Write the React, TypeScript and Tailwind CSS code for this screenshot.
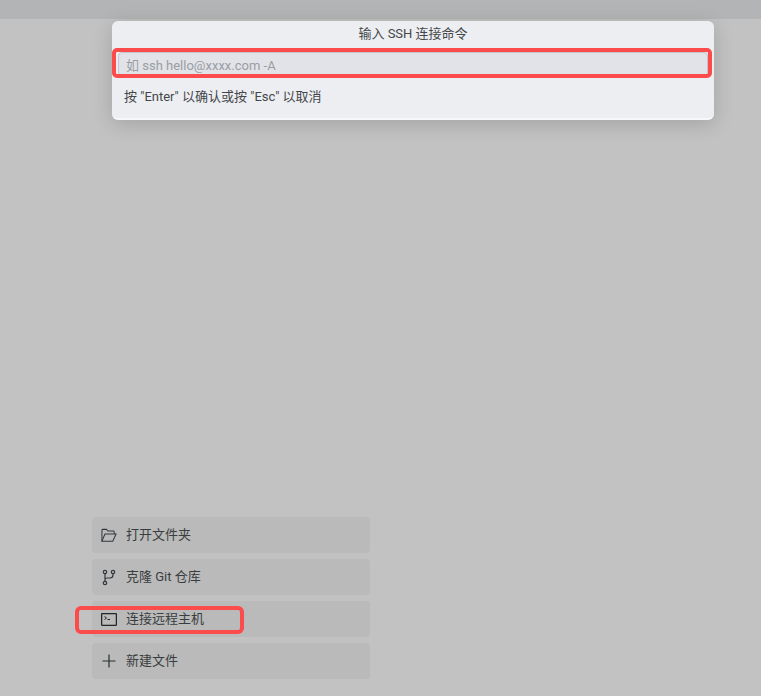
import React from "react";

function Item({ icon, label }: { icon: React.ReactNode; label: string }) {
  return (
    <div className="flex h-9 w-[278px] items-center rounded bg-[#b9bab9] pl-[9px] text-[13px] text-[#3a3d40]">
      <span className="flex w-4 items-center justify-center">{icon}</span>
      <span className="ml-[9px]">{label}</span>
    </div>
  );
}

export default function App() {
  return (
    <div className="relative flex h-[696px] w-[761px] flex-col overflow-hidden bg-[#c2c2c2] font-['Roboto','Noto_Sans_CJK_SC',sans-serif]">
      <div className="h-[19px] bg-[#b3b4b5]" />
      <div className="mt-auto flex flex-col gap-[6px] pb-[17px] pl-[92px]">
        <Item
          label="打开文件夹"
          icon={
            <svg width="17" height="15" viewBox="0 0 17 15" fill="none" stroke="#33383d" strokeWidth="1.1">
              <path d="M1 13.5V2a1 1 0 0 1 1-1h3.8l1.6 1.8H13a1 1 0 0 1 1 1V6" />
              <path d="M1 13.5h11.5L16 6H4.2L1 13.5Z" />
            </svg>
          }
        />
        <Item
          label="克隆 Git 仓库"
          icon={
            <svg width="14" height="17" viewBox="0 0 14 17" fill="none" stroke="#33383d" strokeWidth="1.2">
              <circle cx="3" cy="3" r="1.7" />
              <circle cx="3" cy="14" r="1.7" />
              <circle cx="11" cy="3" r="1.7" />
              <path d="M3 4.7v7.6M11 4.7V6a3 3 0 0 1-3 3H5a2 2 0 0 0-2 2" />
            </svg>
          }
        />
        <Item
          label="连接远程主机"
          icon={
            <svg width="16" height="13" viewBox="0 0 16 13" fill="none" stroke="#22262a" strokeWidth="1.3">
              <rect x="0.6" y="0.6" width="14.8" height="11.8" rx="0.8" />
              <path d="M3.5 3.5 5.5 5 3.5 6.5M6.5 6.5h2.5" strokeWidth="1" />
            </svg>
          }
        />
        <Item
          label="新建文件"
          icon={
            <svg width="14" height="14" viewBox="0 0 14 14" fill="none" stroke="#2b2f33" strokeWidth="1.2">
              <path d="M7 0.5v13M0.5 7h13" />
            </svg>
          }
        />
      </div>

      <div className="absolute left-[112px] top-[21px] flex h-[99px] w-[602px] flex-col rounded-md border-b-2 border-[#f6f7f9] bg-[#edeef2] shadow-[0_4px_20px_rgba(0,0,0,0.16)]">
        <div className="flex h-[26px] items-center justify-center text-[13px] text-[#44474a]">输入 SSH 连接命令</div>
        <div className="mx-[6px] mt-[5px] flex h-6 items-center rounded-sm border border-[#c3c6cc] bg-[#e1e3e8] px-[7px] pt-1 text-[13px] text-[#9a9da3]">
          如 ssh hello@xxxx.com -A
        </div>
        <div className="mt-[11px] pl-3 text-[13px] text-[#44474a]">按 "Enter" 以确认或按 "Esc" 以取消</div>
      </div>

      <div className="absolute left-[112px] top-[48px] h-[30px] w-[600px] rounded-[5px] border-4 border-[#fb4b4b]" />
      <div className="absolute left-[75px] top-[606px] h-[28px] w-[169px] rounded-[6px] border-4 border-[#fb4b4b]" />
    </div>
  );
}
